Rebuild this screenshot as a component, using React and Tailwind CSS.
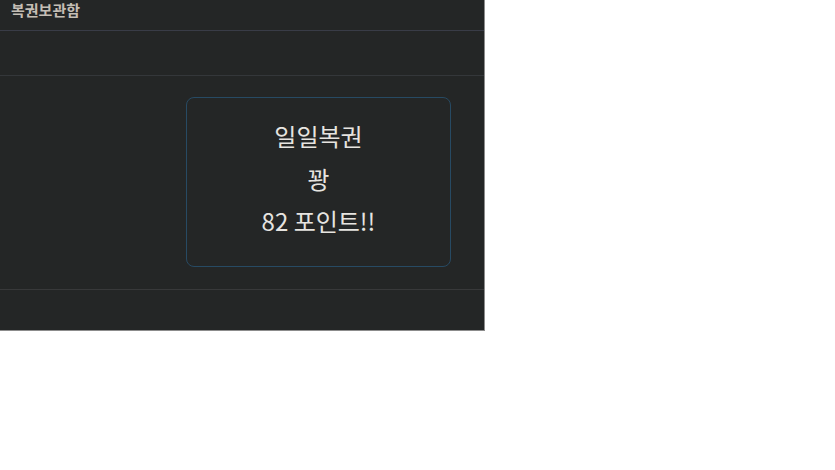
export default function App() {
  return (
    <div
      className="w-[485px] h-[331px] bg-[#242626] border-r border-b border-[#8c8c8c] flex flex-col"
      style={{ fontFamily: '"Noto Sans CJK KR", "Noto Sans", sans-serif' }}
    >
      <div className="h-[31px] border-b border-[#393c47] px-[11px]">
        <span className="text-[15px] font-bold text-[#c4beb5] leading-[20px] block">복권보관함</span>
      </div>
      <div className="h-[45px] border-b border-[#34373a]" />
      <div className="h-[214px] border-b border-[#38393a] flex items-start pl-[186px] pt-[21px]">
        <div className="w-[265px] h-[170px] rounded-lg border border-[#274a63] flex flex-col items-center justify-center text-[#e6e4e0] text-[24px] leading-[42.5px] pb-[6px]">
          <div>일일복권</div>
          <div>꽝</div>
          <div>82 포인트!!</div>
        </div>
      </div>
      <div className="flex-1" />
    </div>
  );
}
